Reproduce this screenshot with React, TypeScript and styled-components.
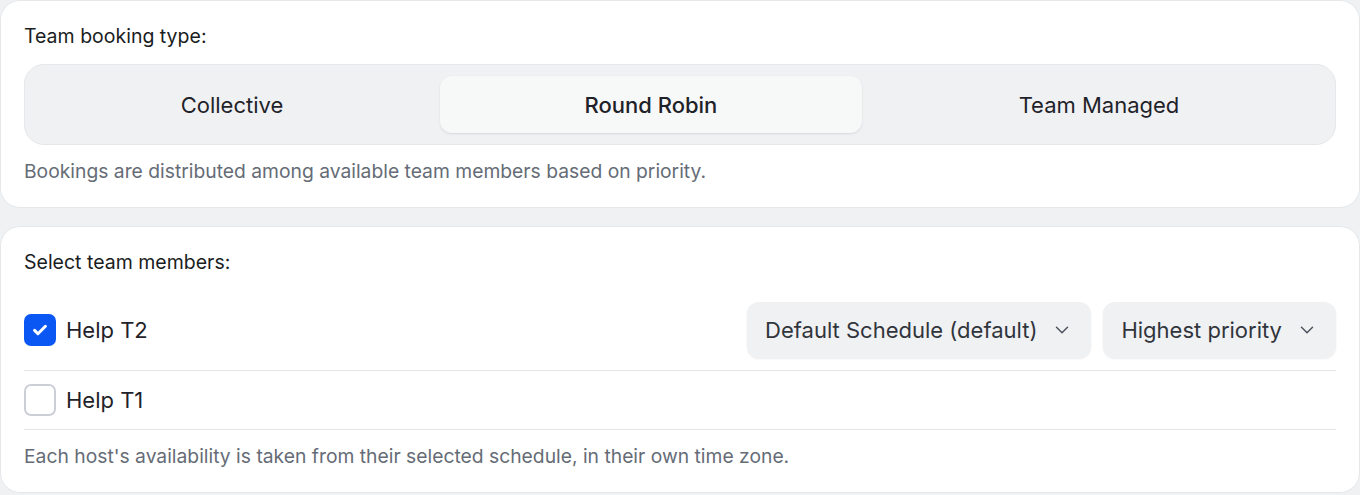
import React, { useState } from 'react';
import styled, { createGlobalStyle } from 'styled-components';

const GlobalStyle = createGlobalStyle`
  html, body {
    margin: 0;
    padding: 0;
    background: #f0f1f3;
    font-family: Inter, "Noto Sans", "Liberation Sans", sans-serif;
    color: #1d2127;
  }
`;

const Page = styled.div`
  display: flex;
  flex-direction: column;
  gap: 18px;
`;

const Card = styled.section`
  background: #ffffff;
  border: 1px solid #e5e7ea;
  border-radius: 20px;
  padding: 23px 23px 24px;
  display: flex;
  flex-direction: column;
`;

const Label = styled.div`
  font-size: 19.5px;
  font-weight: 400;
  line-height: 24px;
  color: #1a1d22;
`;

const Hint = styled.p`
  margin: 0;
  font-size: 19.3px;
  line-height: 24px;
  color: #656c76;
`;

const Segmented = styled.div`
  margin-top: 16px;
  margin-bottom: 14px;
  display: flex;
  gap: 12px;
  padding: 11px;
  background: #f0f1f3;
  border: 1px solid #e6e7ea;
  border-radius: 20px;
`;

const Segment = styled.button<{ active: boolean }>`
  flex: 1 1 auto;
  height: 57px;
  border: none;
  border-radius: 12px;
  font-family: inherit;
  font-size: 22px;
  font-weight: ${p => (p.active ? 500 : 400)};
  color: #1f2329;
  background: ${p => (p.active ? '#f7f8f8' : 'transparent')};
  box-shadow: ${p => (p.active ? '0 1px 3px rgba(0, 0, 0, 0.08), 0 1px 1px rgba(0, 0, 0, 0.03)' : 'none')};
  cursor: pointer;
  padding: 0;
`;

const MemberList = styled.div`
  margin-top: 16px;
  display: flex;
  flex-direction: column;
`;

const MemberRow = styled.div`
  display: flex;
  align-items: center;
  gap: 10px;
  padding: 12px 0;
  min-height: 34px;
  border-bottom: 1px solid #e3e5e8;
`;

const Box = styled.span<{ checked: boolean }>`
  width: 32px;
  height: 32px;
  box-sizing: border-box;
  border-radius: 7px;
  display: flex;
  align-items: center;
  justify-content: center;
  background: ${p => (p.checked ? '#0b57f4' : '#ffffff')};
  border: ${p => (p.checked ? 'none' : '2px solid #ccd0d6')};
  cursor: pointer;
  flex-shrink: 0;
`;

const MemberName = styled.span`
  font-size: 22px;
  color: #1f2329;
  flex: 1;
`;

const Select = styled.button`
  height: 56px;
  display: flex;
  align-items: center;
  gap: 14px;
  padding: 0 18px 0 18px;
  border: none;
  border-radius: 12px;
  background: #f0f1f3;
  box-shadow: 0 1px 2px rgba(0, 0, 0, 0.08);
  font-family: inherit;
  font-size: 22px;
  color: #30353c;
  cursor: pointer;
`;

const Selects = styled.div`
  display: flex;
  gap: 12px;
`;

const FooterHint = styled(Hint)`
  margin-top: 14px;
`;

const Chevron = () => (
  <svg width="22" height="22" viewBox="0 0 24 24" fill="none" stroke="#4b525b" strokeWidth="1.6" strokeLinecap="round" strokeLinejoin="round">
    <path d="m6 9 6 6 6-6" />
  </svg>
);

const Check = () => (
  <svg width="20" height="20" viewBox="0 0 24 24" fill="none" stroke="#ffffff" strokeWidth="3.6" strokeLinecap="round" strokeLinejoin="round">
    <path d="M5.5 12.5l4 4L18.5 7.5" />
  </svg>
);

const types = ['Collective', 'Round Robin', 'Team Managed'];

export default function App() {
  const [type, setType] = useState('Round Robin');
  const [members, setMembers] = useState([
    { name: 'Help T2', checked: true },
    { name: 'Help T1', checked: false },
  ]);

  const toggle = (i: number) =>
    setMembers(m => m.map((x, j) => (j === i ? { ...x, checked: !x.checked } : x)));

  return (
    <>
      <GlobalStyle />
      <Page>
        <Card>
          <Label>Team booking type:</Label>
          <Segmented>
            {types.map(t => (
              <Segment key={t} active={t === type} onClick={() => setType(t)}>
                {t}
              </Segment>
            ))}
          </Segmented>
          <Hint>Bookings are distributed among available team members based on priority.</Hint>
        </Card>
        <Card>
          <Label>Select team members:</Label>
          <MemberList>
            {members.map((m, i) => (
              <MemberRow key={m.name}>
                <Box checked={m.checked} onClick={() => toggle(i)}>
                  {m.checked && <Check />}
                </Box>
                <MemberName>{m.name}</MemberName>
                {m.checked && (
                  <Selects>
                    <Select>
                      Default Schedule (default)
                      <Chevron />
                    </Select>
                    <Select>
                      Highest priority
                      <Chevron />
                    </Select>
                  </Selects>
                )}
              </MemberRow>
            ))}
          </MemberList>
          <FooterHint>Each host's availability is taken from their selected schedule, in their own time zone.</FooterHint>
        </Card>
      </Page>
    </>
  );
}
